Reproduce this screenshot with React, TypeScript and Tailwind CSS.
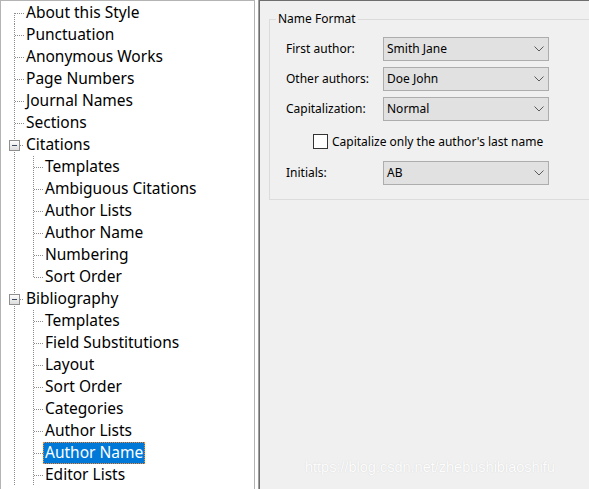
import React from "react";

type Row = {
  label: string;
  level: 0 | 1;
  first?: boolean;
  expander?: boolean;
  lastChild?: boolean;
  selected?: boolean;
};

const rows: Row[] = [
  { label: "About this Style", level: 0, first: true },
  { label: "Punctuation", level: 0 },
  { label: "Anonymous Works", level: 0 },
  { label: "Page Numbers", level: 0 },
  { label: "Journal Names", level: 0 },
  { label: "Sections", level: 0 },
  { label: "Citations", level: 0, expander: true },
  { label: "Templates", level: 1 },
  { label: "Ambiguous Citations", level: 1 },
  { label: "Author Lists", level: 1 },
  { label: "Author Name", level: 1 },
  { label: "Numbering", level: 1 },
  { label: "Sort Order", level: 1, lastChild: true },
  { label: "Bibliography", level: 0, expander: true },
  { label: "Templates", level: 1 },
  { label: "Field Substitutions", level: 1 },
  { label: "Layout", level: 1 },
  { label: "Sort Order", level: 1 },
  { label: "Categories", level: 1 },
  { label: "Author Lists", level: 1 },
  { label: "Author Name", level: 1, selected: true },
  { label: "Editor Lists", level: 1 },
];

const LINE = "#8c8c8c";

function Connector({ row }: { row: Row }) {
  if (row.level === 0) {
    return (
      <svg width={23} height={22} className="shrink-0" shapeRendering="crispEdges">
        <line x1={13.5} y1={row.first ? 11 : 0} x2={13.5} y2={22} stroke={LINE} strokeDasharray="1 1" />
        <line x1={row.expander ? 19 : 14} y1={11.5} x2={23} y2={11.5} stroke={LINE} strokeDasharray="1 1" />
        {row.expander && (
          <g>
            <defs>
              <linearGradient id="exg" x1="0" y1="0" x2="0" y2="1">
                <stop offset="0" stopColor="#ffffff" />
                <stop offset="1" stopColor="#dcdcdc" />
              </linearGradient>
            </defs>
            <rect x={8.5} y={6.5} width={10} height={10} fill="url(#exg)" stroke="#8f8f8f" />
            <line x1={11} y1={11.5} x2={16} y2={11.5} stroke="#3b4a5e" />
          </g>
        )}
      </svg>
    );
  }
  return (
    <svg width={42} height={22} className="shrink-0" shapeRendering="crispEdges">
      <line x1={13.5} y1={0} x2={13.5} y2={22} stroke={LINE} strokeDasharray="1 1" />
      <line x1={32.5} y1={0} x2={32.5} y2={row.lastChild ? 12 : 22} stroke={LINE} strokeDasharray="1 1" />
      <line x1={33} y1={11.5} x2={42} y2={11.5} stroke={LINE} strokeDasharray="1 1" />
    </svg>
  );
}

function Combo({ value }: { value: string }) {
  return (
    <div className="w-[166px] h-[24px] bg-[#e1e1e1] border border-[#adadad] flex items-center pl-[3px] pr-[4px]">
      <span className="flex-1 text-[12px] text-black leading-none">{value}</span>
      <svg width={10} height={6} className="shrink-0">
        <polyline points="0.5,0.5 5,5 9.5,0.5" fill="none" stroke="#5a5a5a" strokeWidth={1} />
      </svg>
    </div>
  );
}

function FieldRow({ label, value }: { label: string; value: string }) {
  return (
    <div className="flex items-center h-[24px]">
      <span className="w-[97px] text-[12px] text-black">{label}</span>
      <Combo value={value} />
    </div>
  );
}

export default function App() {
  return (
    <div className="w-[589px] h-[489px] bg-white flex overflow-hidden" style={{ fontFamily: '"Noto Sans", "Liberation Sans", sans-serif' }}>
      {/* Tree */}
      <div className="w-[255px] h-full border-l border-t border-r border-[#b4b4b4] bg-white pt-[1px] overflow-hidden shrink-0">
        {rows.map((r, i) => (
          <div key={i} className="flex h-[22px] items-stretch">
            <Connector row={r} />
            <span
              className={
                "flex items-center px-[1px] pb-[1px] text-[15.5px] leading-none whitespace-nowrap border " +
                (r.selected
                  ? "bg-[#0078d7] text-white border-dotted border-[#ff8728]"
                  : "text-black border-transparent")
              }
            >
              {r.label}
            </span>
          </div>
        ))}
      </div>
      <div className="w-[3px] shrink-0" />
      {/* Right panel */}
      <div className="flex-1 h-full border-l border-[#a0a0a0] overflow-hidden">
        <div className="relative h-full border-l border-t border-[#6e6e6e] bg-[#f0f0f0] pt-[18px] pl-[9px] overflow-hidden">
          <div className="relative w-[340px] border border-[#dcdcdc] pt-[17px] pb-[14px] pl-[16px]">
            <span className="absolute top-[-9px] left-[6px] px-[2px] bg-[#f0f0f0] text-[12px] text-black leading-[16px]">
              Name Format
            </span>
            <div className="flex flex-col gap-[6px]">
              <FieldRow label="First author:" value="Smith Jane" />
              <FieldRow label="Other authors:" value="Doe John" />
              <FieldRow label="Capitalization:" value="Normal" />
            </div>
            <div className="flex items-center h-[15px] mt-[13px] pl-[27px]">
              <div className="w-[15px] h-[15px] border border-[#333333] bg-white shrink-0" />
              <span className="ml-[4px] text-[12px] text-black whitespace-nowrap">Capitalize only the author's last name</span>
            </div>
            <div className="mt-[12px]">
              <FieldRow label="Initials:" value="AB" />
            </div>
          </div>
          <span
            className="absolute left-[45px] top-[456px] text-[14.5px] text-[#fdfdfd] whitespace-nowrap [text-shadow:0_0_1px_#cccccc]"
            style={{ fontFamily: '"Liberation Sans", Arial, sans-serif' }}
          >
            https://blog.csdn.net/zhebushibiaoshifu
          </span>
        </div>
      </div>
    </div>
  );
}
